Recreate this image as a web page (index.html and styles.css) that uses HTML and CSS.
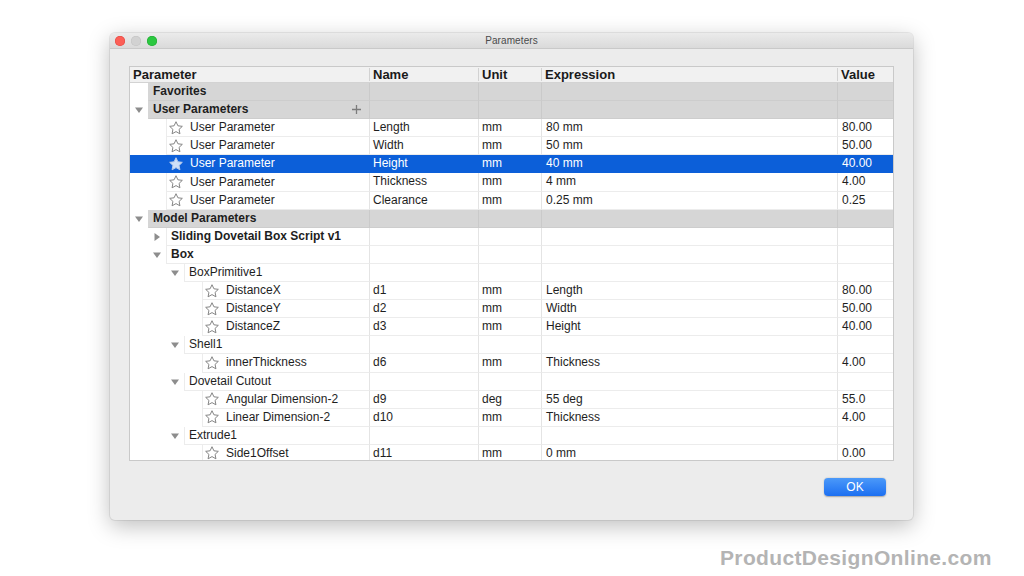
FILE: index.html
```html
<!DOCTYPE html>
<html>
<head>
<meta charset="utf-8">
<title>Parameters</title>
<link rel="stylesheet" href="styles.css">
</head>
<body>
<svg width="0" height="0" class="defs">
  <defs>
    <symbol id="star" viewBox="0 0 24 24"><path d="M12 2.6l2.9 6.1 6.6.8-4.9 4.6 1.3 6.6L12 17.4l-5.9 3.3 1.3-6.6-4.9-4.6 6.6-.8z"/></symbol>
    <symbol id="down" viewBox="0 0 8 8"><polygon points="0,1.5 8,1.5 4,7"/></symbol>
    <symbol id="right" viewBox="0 0 8 8"><polygon points="1.5,0 7,4 1.5,8"/></symbol>
  </defs>
</svg>
<div class="page">
  <div class="window">
    <div class="titlebar">
      <div class="lights"><span class="light red"></span><span class="light idle"></span><span class="light green"></span></div>
      <div class="title">Parameters</div>
      <div></div>
    </div>
    <div class="content">
      <div class="table">
        <div class="row hdr">
          <div class="h">Parameter</div><div class="h sep">Name</div><div class="h sep">Unit</div><div class="h sep">Expression</div><div class="h sep">Value</div>
        </div>

        <div class="row grp">
          <div class="tree l0"><span class="tw"></span><div class="lbl b">Favorites</div></div>
          <div class="c"></div><div class="c"></div><div class="c"></div><div class="c"></div>
        </div>
        <div class="row grp">
          <div class="tree l0"><span class="tw"><svg class="tri"><use href="#down"/></svg></span><div class="lbl b">User Parameters<span class="plus"><svg viewBox="0 0 9 9"><path d="M4.5 0v9M0 4.5h9"/></svg></span></div></div>
          <div class="c"></div><div class="c"></div><div class="c"></div><div class="c"></div>
        </div>

        <div class="row">
          <div class="tree l1"><span class="tw"></span><div class="lbl leaf"><svg class="star"><use href="#star"/></svg><span>User Parameter</span></div></div>
          <div class="c">Length</div><div class="c">mm</div><div class="c">80 mm</div><div class="c">80.00</div>
        </div>
        <div class="row">
          <div class="tree l1"><span class="tw"></span><div class="lbl leaf"><svg class="star"><use href="#star"/></svg><span>User Parameter</span></div></div>
          <div class="c">Width</div><div class="c">mm</div><div class="c">50 mm</div><div class="c">50.00</div>
        </div>
        <div class="row sel">
          <div class="tree l1"><span class="tw"></span><div class="lbl leaf"><svg class="star"><use href="#star"/></svg><span>User Parameter</span></div></div>
          <div class="c">Height</div><div class="c">mm</div><div class="c">40 mm</div><div class="c">40.00</div>
        </div>
        <div class="row">
          <div class="tree l1"><span class="tw"></span><div class="lbl leaf"><svg class="star"><use href="#star"/></svg><span>User Parameter</span></div></div>
          <div class="c">Thickness</div><div class="c">mm</div><div class="c">4 mm</div><div class="c">4.00</div>
        </div>
        <div class="row">
          <div class="tree l1"><span class="tw"></span><div class="lbl leaf"><svg class="star"><use href="#star"/></svg><span>User Parameter</span></div></div>
          <div class="c">Clearance</div><div class="c">mm</div><div class="c">0.25 mm</div><div class="c">0.25</div>
        </div>

        <div class="row grp">
          <div class="tree l0"><span class="tw"><svg class="tri"><use href="#down"/></svg></span><div class="lbl b">Model Parameters</div></div>
          <div class="c"></div><div class="c"></div><div class="c"></div><div class="c"></div>
        </div>
        <div class="row">
          <div class="tree l1"><span class="tw"><svg class="tri"><use href="#right"/></svg></span><div class="lbl b">Sliding Dovetail Box Script v1</div></div>
          <div class="c"></div><div class="c"></div><div class="c"></div><div class="c"></div>
        </div>
        <div class="row">
          <div class="tree l1"><span class="tw"><svg class="tri"><use href="#down"/></svg></span><div class="lbl b">Box</div></div>
          <div class="c"></div><div class="c"></div><div class="c"></div><div class="c"></div>
        </div>
        <div class="row">
          <div class="tree l2"><span class="tw"><svg class="tri"><use href="#down"/></svg></span><div class="lbl">BoxPrimitive1</div></div>
          <div class="c"></div><div class="c"></div><div class="c"></div><div class="c"></div>
        </div>
        <div class="row">
          <div class="tree l3"><span class="tw"></span><div class="lbl leaf"><svg class="star"><use href="#star"/></svg><span>DistanceX</span></div></div>
          <div class="c">d1</div><div class="c">mm</div><div class="c">Length</div><div class="c">80.00</div>
        </div>
        <div class="row">
          <div class="tree l3"><span class="tw"></span><div class="lbl leaf"><svg class="star"><use href="#star"/></svg><span>DistanceY</span></div></div>
          <div class="c">d2</div><div class="c">mm</div><div class="c">Width</div><div class="c">50.00</div>
        </div>
        <div class="row">
          <div class="tree l3"><span class="tw"></span><div class="lbl leaf"><svg class="star"><use href="#star"/></svg><span>DistanceZ</span></div></div>
          <div class="c">d3</div><div class="c">mm</div><div class="c">Height</div><div class="c">40.00</div>
        </div>
        <div class="row">
          <div class="tree l2"><span class="tw"><svg class="tri"><use href="#down"/></svg></span><div class="lbl">Shell1</div></div>
          <div class="c"></div><div class="c"></div><div class="c"></div><div class="c"></div>
        </div>
        <div class="row">
          <div class="tree l3"><span class="tw"></span><div class="lbl leaf"><svg class="star"><use href="#star"/></svg><span>innerThickness</span></div></div>
          <div class="c">d6</div><div class="c">mm</div><div class="c">Thickness</div><div class="c">4.00</div>
        </div>
        <div class="row">
          <div class="tree l2"><span class="tw"><svg class="tri"><use href="#down"/></svg></span><div class="lbl">Dovetail Cutout</div></div>
          <div class="c"></div><div class="c"></div><div class="c"></div><div class="c"></div>
        </div>
        <div class="row">
          <div class="tree l3"><span class="tw"></span><div class="lbl leaf"><svg class="star"><use href="#star"/></svg><span>Angular Dimension-2</span></div></div>
          <div class="c">d9</div><div class="c">deg</div><div class="c">55 deg</div><div class="c">55.0</div>
        </div>
        <div class="row">
          <div class="tree l3"><span class="tw"></span><div class="lbl leaf"><svg class="star"><use href="#star"/></svg><span>Linear Dimension-2</span></div></div>
          <div class="c">d10</div><div class="c">mm</div><div class="c">Thickness</div><div class="c">4.00</div>
        </div>
        <div class="row">
          <div class="tree l2"><span class="tw"><svg class="tri"><use href="#down"/></svg></span><div class="lbl">Extrude1</div></div>
          <div class="c"></div><div class="c"></div><div class="c"></div><div class="c"></div>
        </div>
        <div class="row">
          <div class="tree l3"><span class="tw"></span><div class="lbl leaf"><svg class="star"><use href="#star"/></svg><span>Side1Offset</span></div></div>
          <div class="c">d11</div><div class="c">mm</div><div class="c">0 mm</div><div class="c">0.00</div>
        </div>
      </div>
      <div class="actions"><button class="ok">OK</button></div>
    </div>
  </div>
</div>
<div class="watermark">ProductDesignOnline.com</div>
</body>
</html>
```

FILE: styles.css
```css
* { box-sizing: border-box; }
html, body { margin: 0; padding: 0; background: #ffffff; }
body {
  font-family: "Liberation Sans", Arial, sans-serif;
  color: #1e1e1e;
  width: 1024px;
  height: 576px;
  overflow: hidden;
  position: relative;
}
.defs { position: absolute; width: 0; height: 0; }

.page { padding: 33px 0 0 110px; }

.window {
  width: 803px;
  height: 487px;
  background: #ececec;
  border-radius: 5px;
  box-shadow: 0 0 0 1px rgba(0,0,0,0.07), 0 6px 22px rgba(0,0,0,0.26);
  display: flex;
  flex-direction: column;
  overflow: hidden;
}

.titlebar {
  height: 16px;
  flex: none;
  display: grid;
  grid-template-columns: 1fr auto 1fr;
  align-items: center;
  background: linear-gradient(#ebebeb, #dadada);
  border-bottom: 1px solid #c9c9c9;
}
.lights { display: flex; gap: 6px; padding-left: 5px; }
.light { width: 10px; height: 10px; border-radius: 50%; display: block; }
.red { background: #fc5f57; box-shadow: inset 0 0 0 0.5px #e0443e; }
.idle { background: #d2d2d2; box-shadow: inset 0 0 0 0.5px #c2c2c2; }
.green { background: #2bc840; box-shadow: inset 0 0 0 0.5px #1fa52f; }
.title { font-size: 10px; color: #4b4b4b; letter-spacing: 0.1px; }

.content {
  flex: 1;
  padding: 17px 19px 0 19px;
  display: flex;
  flex-direction: column;
}

.table {
  height: 395px;
  border: 1px solid #c9c9c9;
  background: #ffffff;
  overflow: hidden;
}

.row {
  display: grid;
  grid-template-columns: 239px 109px 63px 296px 1fr;
  height: 18.1px;
  font-size: 12px;
  line-height: 17px;
}

.hdr {
  height: 16px;
  background: #f1f1f1;
  border-bottom: 1px solid #d3d3d3;
  font-size: 13px;
  font-weight: bold;
  line-height: 15px;
  color: #1a1a1a;
}
.h { padding-left: 3px; white-space: nowrap; }
.h.sep {
  background: linear-gradient(#d2d2d2, #d2d2d2) left 1px / 1px 13px no-repeat;
  padding-left: 4px;
}

.c {
  border-left: 1px solid #e4e4e4;
  border-bottom: 1px solid #ececec;
  padding-left: 3px;
  white-space: nowrap;
  overflow: hidden;
}
.row > .c:nth-child(4), .row > .c:nth-child(5) { padding-left: 4px; }

.tree { display: flex; height: 100%; }
.l0 { padding-left: 0; }
.l1 { padding-left: 18px; }
.l2 { padding-left: 36px; }
.l3 { padding-left: 54px; }

.tw {
  width: 18px;
  flex: none;
  display: flex;
  align-items: center;
  justify-content: center;
  padding-right: 1px;
}
.tri { width: 8px; height: 8px; fill: #8d8d8d; }

.lbl {
  flex: 1;
  display: flex;
  align-items: center;
  padding-left: 4px;
  border-left: 1px solid #ececec;
  border-bottom: 1px solid #ececec;
  white-space: nowrap;
  overflow: hidden;
}
.lbl.b { font-weight: bold; }
.lbl.leaf { padding-left: 0; }
.star {
  width: 16px;
  height: 16px;
  flex: none;
  margin: 0 6px 0 1px;
  fill: none;
  stroke: #858585;
  stroke-width: 1.5;
  stroke-linejoin: round;
}

.plus { margin-left: auto; margin-right: 8px; display: flex; }
.plus svg { width: 9px; height: 9px; stroke: #7c7c7c; stroke-width: 1.3; }

.grp .lbl, .grp .c {
  background: #d6d6d6;
  border-bottom-color: #cdcdcd;
}
.grp .c { border-left-color: #cacaca; }
.grp .lbl { border-left-color: #d6d6d6; }

.sel { background: #0c5fd9; color: #ffffff; }
.sel .lbl, .sel .c { border-color: #0c5fd9; }
.sel .star { fill: rgba(255,255,255,0.8); stroke: #b5c9ea; }

.actions {
  display: flex;
  justify-content: flex-end;
  padding: 17px 8px 0 0;
}
.ok {
  width: 62px;
  height: 18px;
  border: none;
  border-radius: 4px;
  background: linear-gradient(#4b99f9, #1c6ff1);
  box-shadow: 0 0.5px 1.5px rgba(0,0,0,0.3);
  color: #ffffff;
  font-family: "Liberation Sans", Arial, sans-serif;
  font-size: 12px;
  line-height: 18px;
  padding: 0;
}

.watermark {
  position: absolute;
  left: 720px;
  top: 546px;
  font-size: 21px;
  line-height: 24px;
  font-weight: bold;
  color: #b4b4b4;
  letter-spacing: 0.35px;
}
```
